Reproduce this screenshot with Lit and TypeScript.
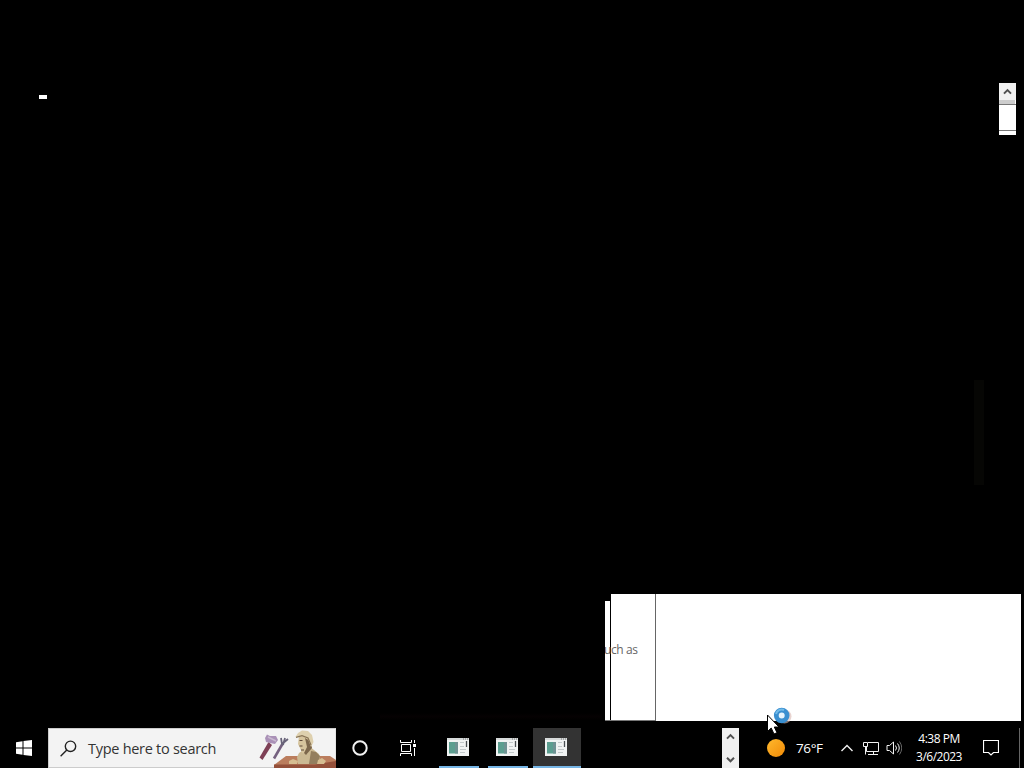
import { LitElement, html, css, svg } from "lit";
import { customElement, property } from "lit/decorators.js";

@customElement("app-root")
export class AppRoot extends LitElement {
  static styles = css`
    :host {
      display: flex;
      flex-direction: column;
      width: 1024px;
      height: 768px;
      overflow: hidden;
      background: #000;
      font-family: "Open Sans", "Noto Sans", sans-serif;
    }
    .desktop {
      position: relative;
      flex: 1;
    }
    .caret, .scroll-top, .shade, .glow, .window-back, .window-mid, .window-front, .pointer {
      position: absolute;
    }
    .caret { left: 39px; top: 95px; width: 8px; height: 4px; background: #fff; }
    .scroll-top {
      left: 999px; top: 83px; width: 17px; height: 52px;
      display: flex; flex-direction: column; background: #fff;
    }
    .arrow { height: 17px; background: #f1f1f1; }
    .thumb { height: 4px; width: 16px; background: #cdcdcd; }
    .scroll-rule { height: 1px; background: #777; }
    .scroll-rule + .scroll-rule { margin-top: 25px; }
    .shade { left: 974px; top: 380px; width: 10px; height: 105px; background: #060604; }
    .glow { left: 380px; top: 713px; width: 222px; height: 7px; background: linear-gradient(#000, #050102, #000); }
    .window-back { left: 605px; top: 601px; width: 5px; height: 120px; background: #fff; }
    .window-mid {
      left: 605px; top: 601px; width: 50px; height: 119px;
      display: flex; align-items: center; overflow: hidden;
      border-bottom: 1px solid #777;
    }
    .snippet {
      color: #666; font-size: 12px; line-height: 16px; margin-top: -22px; margin-left: -1px;
      letter-spacing: -0.4px; white-space: nowrap;
    }
    .window-front { left: 611px; top: 594px; width: 410px; height: 127px; display: flex; background: #fff; }
    .pane { width: 44px; border-right: 1px solid #666; }
    .pointer { left: 764px; top: 704px; z-index: 2; }
    .taskbar { display: flex; height: 40px; background: #000; color: #fff; }
    .button { width: 48px; display: flex; align-items: center; justify-content: center; }
    .search {
      box-sizing: border-box; width: 288px; display: flex; align-items: center;
      background: #f3f3f3; border: 1px solid #ccc; border-right-color: #e4e4e4; color: #333;
    }
    .search-icon { margin-left: 11px; }
    .placeholder {
      flex: 1; margin-left: 11px; font-size: 14.5px; letter-spacing: -0.28px; white-space: nowrap;
    }
    .art { align-self: flex-start; margin-top: -1px; margin-right: -1px; }
    .apps { display: flex; gap: 1px; margin-left: 3px; }
    .scroll-bottom {
      margin-left: 141px; width: 17px; background: #f0f0f0;
      display: flex; flex-direction: column; justify-content: space-between;
    }
    .weather {
      margin-left: 28px; width: 57px; display: flex; align-items: center; gap: 11px;
      font-size: 13.5px; letter-spacing: -0.4px; white-space: nowrap;
    }
    .sun {
      flex: none; width: 18px; height: 18px; border-radius: 50%;
      background: linear-gradient(135deg, #ffb92e, #f08a06);
    }
    .tray { display: flex; align-items: center; margin-left: 16px; }
    .clock {
      width: 54px; margin-left: 10px; display: flex; flex-direction: column;
      align-items: center; justify-content: center;
      font-size: 12px; line-height: 18px; letter-spacing: -0.5px; white-space: nowrap;
    }
    .notice { margin-left: 17px; display: flex; align-items: center; }
    .peek { margin-left: 20px; width: 1px; background: #666; }
    svg { display: block; flex: none; }
  `;

  arrow(down = false) {
    return html`<svg width="17" height="17" viewBox="0 0 17 17">
      <path d=${down ? "M5 6.8l3.5 3.5L12 6.8" : "M5 10.6l3.5-3.5 3.5 3.5"} fill="none" stroke="#505050" stroke-width="2"/>
    </svg>`;
  }

  searchArt() {
    return svg`<svg width="84" height="40" viewBox="252 728 84 40">
      <path d="M274 765L286 756H330L336 760V768H274Z" fill="#bb7d5d"/>
      <path d="M274 764.500H315L336 761V768H274Z" fill="#94503a"/>
      <path d="M268.500 742L259.500 757.500L262.500 760L272 745Z" fill="#7e4056"/>
      <path d="M267 734.500L270 736L276 736L278 740L275 744L270 743L266 742L265 738Z" fill="#aa91b7"/>
      <path d="M268 737L276 741" stroke="#c9b9d0" stroke-width="1.500"/>
      <path d="M274 758.500L283 743" stroke="#75617f" stroke-width="2.600"/>
      <path d="M281 738L282 744L288 739M285 738L283 745" fill="none" stroke="#686379" stroke-width="1.800"/>
      <path d="M299 753L309 746L314 750L319 754L320 758L318 764H298L297 757Z" fill="#cbb993"/>
      <path d="M311 751L316 752L320 756L318 764H309Z" fill="#937e5e"/>
      <path d="M299 736L311 737L312 748L307 754L302 753L300 748L298 744Z" fill="#d6c49d"/>
      <path d="M305 738L310 741L312 748L306 755L304 753L307 747Z" fill="#7c674c"/>
      <path d="M295.500 737L298 733L302 730.500L308 731L312 735L313.500 742L311 747L308 739L302 736Z" fill="#ded0ae"/>
      <path d="M296 737.300L302 735.600L308 738L311 745" fill="none" stroke="#8a7555" stroke-width="1.200"/>
      <path d="M299.500 740.500H302.500M299.500 746H302.500M301 750H304" stroke="#5f4b39"/>
      <path d="M289 761L293 759L298 761L297 764H289ZM318 760L322 758L326 761L324 764H317Z" fill="#d6bd91"/>
    </svg>`;
  }

  render() {
    return html`
      <main class="desktop">
        <div class="caret"></div>
        <div class="scroll-top">
          <div class="arrow">${this.arrow()}</div>
          <div class="thumb"></div><div class="scroll-rule"></div><div class="scroll-rule"></div>
        </div>
        <div class="shade"></div>
        <div class="glow"></div>
        <div class="window-back"></div>
        <div class="window-front"><div class="pane"></div></div>
        <div class="window-mid"><span class="snippet">uch as</span></div>
        <svg class="pointer" width="32" height="32" viewBox="764 704 32 32">
          <circle cx="784.500" cy="716.500" r="7" fill="#d9b8b0" opacity=".6"/>
          <circle cx="781.700" cy="715.500" r="5.400" fill="#e6f3fc" stroke="#3a8fd0" stroke-width="4.800"/>
          <path d="M776 714A6 6 0 0 1 784 710" fill="none" stroke="#71bae8" stroke-width="2"/>
          <path d="M767.500 715V731.500L771.200 728L774 734L777 732.700L774.300 727H779Z" fill="#fff" stroke="#000"/>
        </svg>
      </main>
      <footer class="taskbar">
        <div class="button">
          <svg width="16" height="16" viewBox="0 0 16 16"><path d="M0 2.200L6.500 1.300V7.500H0ZM7.500 1.100L16 0V7.500H7.500ZM0 8.500H6.500V14.700L0 13.800ZM7.500 8.500H16V16L7.500 14.900Z" fill="#fff"/></svg>
        </div>
        <div class="search">
          <svg class="search-icon" width="17" height="17" viewBox="0 0 17 17"><circle cx="10.500" cy="6.300" r="5.200" fill="none" stroke="#222" stroke-width="1.400"/><path d="M6.800 10L.6 16.200" stroke="#222" stroke-width="1.400"/></svg>
          <span class="placeholder">Type here to search</span>
          <div class="art">${this.searchArt()}</div>
        </div>
        <div class="button"><svg width="16" height="16" viewBox="0 0 16 16"><circle cx="8" cy="8" r="6.700" fill="none" stroke="#f2f2f2" stroke-width="2"/></svg></div>
        <div class="button">
          <svg width="16" height="16" viewBox="0 0 16 16" fill="none" stroke="#fff"><path d="M.5 0V2.500H11.500V0M.5 16V13.500H11.500V16M1.500 4.500H10.500V11.500H1.500ZM14.500 0V3M14.500 8V16"/><path d="M13 4H16V7H13Z" fill="#fff" stroke="none"/></svg>
        </div>
        <nav class="apps">
          <task-button></task-button><task-button></task-button><task-button active></task-button>
        </nav>
        <div class="scroll-bottom">${this.arrow()}${this.arrow(true)}</div>
        <div class="weather"><div class="sun"></div><span>76°F</span></div>
        <div class="tray">
          <svg width="62" height="18" viewBox="840 739 62 18" fill="none" stroke="#f2f2f2">
            <path d="M841.500 751L847 745.500L852.500 751" stroke-width="1.400"/>
            <path d="M868 742.500H878.500V751.500H866.500V747M873.500 751.500V754.500M868 754.500H878M863.500 742.500H867.500V746.500H863.500ZM865.500 746.500V754.500"/>
            <path d="M887 745.500H889.500L893.500 742V754L889.500 750.500H887Z"/>
            <path d="M895.500 745.500Q897.500 748 895.500 750.500M897.500 743.500Q901 748 897.500 752.500"/><path d="M899.500 741.500Q904 748 899.500 754.500" stroke="#666"/>
          </svg>
        </div>
        <div class="clock"><span>4:38 PM</span><span>3/6/2023</span></div>
        <div class="notice"><svg width="16" height="16" viewBox="0 0 16 16"><path d="M.5 .5H15.500V12.500H10.500L8 15L5.500 12.500H.5Z" fill="none" stroke="#fff" stroke-width="1.200"/></svg></div>
        <div class="peek"></div>
      </footer>`;
  }
}

@customElement("task-button")
export class TaskButton extends LitElement {
  @property({ type: Boolean, reflect: true }) active = false;

  static styles = css`
    :host { width: 48px; height: 40px; display: flex; flex-direction: column; align-items: center; }
    :host([active]) { background: #333; }
    .icon { height: 38px; display: flex; align-items: center; padding-right: 2px; }
    .line { width: 40px; height: 2px; background: #76b5e5; }
    :host([active]) .line { width: 48px; }
    svg { display: block; }
  `;

  render() {
    return html`<div class="icon"><svg width="22" height="18" viewBox="0 0 22 18">
        <path d="M0 0H22V18H0Z" fill="#f1f3f3"/>
        <path d="M0 0H22V2H0Z" fill="#d6dada"/>
        <path d="M2 4H11V15.500H2Z" fill="#5c9e90"/>
        <path d="M8 4H11V15.500H8Z" fill="#6f9293"/>
        <path d="M13 4.500H17M13 8.500H17M13 11.500H19M13 14.500H18" stroke="#c2c8c9"/>
        <path d="M19.500 3V9" stroke="#4b5054" stroke-width="1.300"/>
        <path d="M16 1H17M18 1H19M20 1H21" stroke="#777"/>
      </svg></div><div class="line"></div>`;
  }
}
